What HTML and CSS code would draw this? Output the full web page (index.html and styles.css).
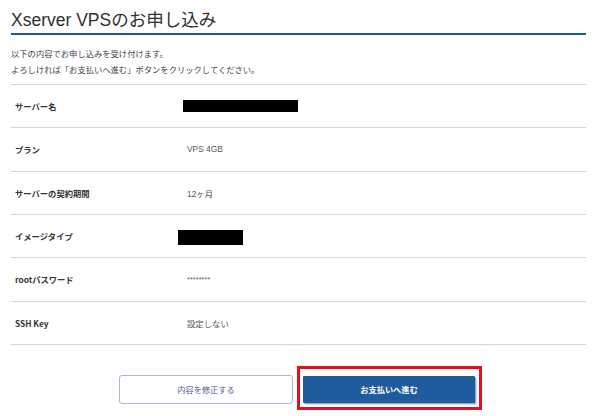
FILE: index.html
```html
<!DOCTYPE html>
<html lang="ja">
<head>
<meta charset="utf-8">
<link rel="stylesheet" href="styles.css">
</head>
<body>
<div class="page">
  <h1 class="title">Xserver VPSのお申し込み</h1>
  <div class="intro">
    <p>以下の内容でお申し込みを受け付けます。</p>
    <p>よろしければ「お支払いへ進む」ボタンをクリックしてください。</p>
  </div>
  <div class="table">
    <div class="row"><div class="label">サーバー名</div><div class="value"><span class="redact redact-1"></span></div></div>
    <div class="row"><div class="label">プラン</div><div class="value">VPS 4GB</div></div>
    <div class="row"><div class="label">サーバーの契約期間</div><div class="value">12ヶ月</div></div>
    <div class="row"><div class="label">イメージタイプ</div><div class="value"><span class="redact redact-2"></span></div></div>
    <div class="row"><div class="label">rootパスワード</div><div class="value stars">********</div></div>
    <div class="row"><div class="label">SSH Key</div><div class="value">設定しない</div></div>
  </div>
  <div class="actions">
    <button class="btn btn-back">内容を修正する</button>
    <div class="highlight"><button class="btn btn-pay">お支払いへ進む</button></div>
  </div>
</div>
</body>
</html>
```
FILE: styles.css
```css
html, body {
  margin: 0;
  padding: 0;
  background: #fff;
}
body {
  min-height: 416px;
  font-family: "Noto Sans CJK JP", "Liberation Sans", sans-serif;
  color: #333;
}
.page {
  padding: 0 14px 0 11px;
}
.title {
  margin: 0;
  padding: 8px 0 1px;
  font-family: "Liberation Sans", "Noto Sans CJK JP", sans-serif;
  font-weight: normal;
  font-size: 17.5px;
  line-height: 24px;
  color: #2f2f2f;
  border-bottom: 2px solid #1d55a3;
}
.intro {
  margin: 10px 0 7px;
  font-size: 8.3px;
  line-height: 16px;
  color: #444;
}
.intro p {
  margin: 0;
}
.table {
  border-bottom: 1px solid #c9d6e3;
}
.row {
  display: grid;
  grid-template-columns: 176px 1fr;
  align-items: center;
  height: 42.33px;
  border-top: 1px solid #c9d6e3;
}
.label {
  padding-left: 4px;
  font-size: 8.3px;
  font-weight: bold;
  color: #333;
}
.value {
  font-size: 8.4px;
  color: #555;
  font-family: "Liberation Sans", "Noto Sans CJK JP", sans-serif;
}
.stars {
  font-size: 7px;
  letter-spacing: 0.2px;
}
.redact {
  display: block;
  background: #000;
}
.redact-1 {
  width: 115px;
  height: 12px;
  margin: -1px 0 0 -4px;
}
.redact-2 {
  width: 65px;
  height: 15px;
  margin: 2px 0 0 -9px;
}
.actions {
  display: flex;
  justify-content: center;
  align-items: flex-start;
  gap: 10px;
  margin-top: 30px;
  padding-right: 3px;
}
.btn {
  font-family: "Noto Sans CJK JP", sans-serif;
  font-size: 8.2px;
  height: 29px;
  width: 174px;
  padding: 0;
  cursor: pointer;
  display: block;
}
.btn-back {
  background: #fff;
  border: 1px solid #a3b9d4;
  border-radius: 3px;
  color: #4b5c91;
}
.btn-pay {
  width: 172px;
  height: 27px;
  margin-top: 1px;
  margin-bottom: 1px;
  background: #1e5c9e;
  border: none;
  border-radius: 1px;
  color: #fff;
  font-weight: bold;
  box-shadow: 1px 1px 0 #9aa9bb, 2px 2px 0 #d3dae3;
}
.highlight {
  position: relative;
  height: 29px;
}
.highlight::after {
  content: "";
  position: absolute;
  box-sizing: border-box;
  left: -6px;
  top: -9px;
  width: 185px;
  height: 44px;
  border: 3px solid #e50f1b;
  pointer-events: none;
}
```
